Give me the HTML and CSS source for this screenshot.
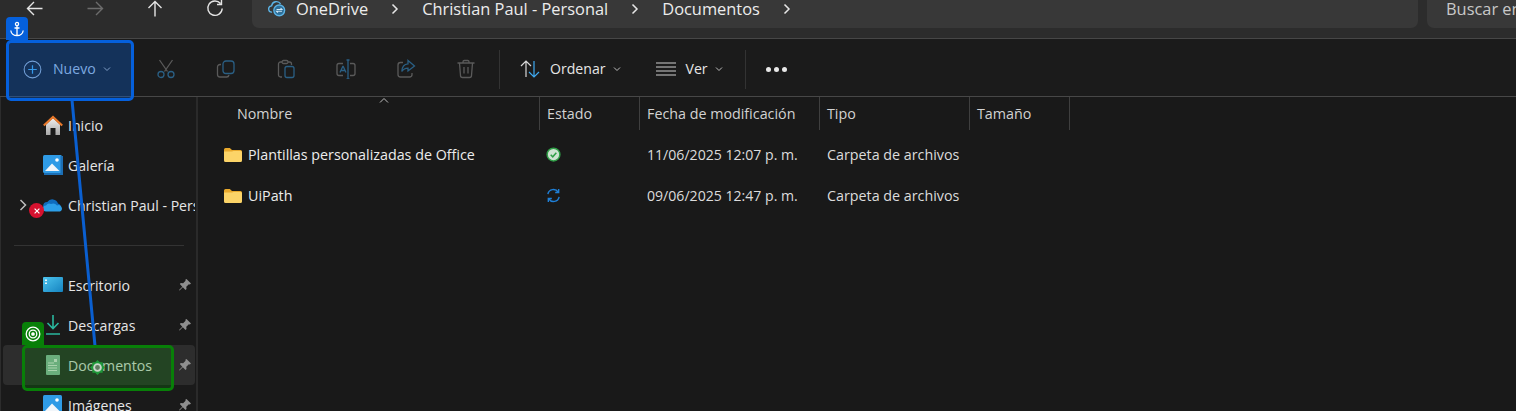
FILE: index.html
```html
<!DOCTYPE html>
<html lang="es">
<head>
<meta charset="utf-8">
<title>Documentos - Explorador de archivos</title>
<link rel="stylesheet" href="styles.css">
</head>
<body>
<div class="app">
  <header class="topbar">
    <div class="navbtns">
      <svg class="nav-ic" viewBox="0 0 20 20"><path d="M17.500 8.500H2.500M9 2 2.500 8.500 9 15"/></svg>
      <svg class="nav-ic dim" viewBox="0 0 20 20"><path d="M2.500 8.500h15M11 2l6.500 6.500L11 15"/></svg>
      <svg class="nav-ic" viewBox="0 0 20 20"><path d="M10 16.500V1.500M3.500 8 10 1.500 16.500 8"/></svg>
      <svg class="nav-ic" viewBox="0 0 20 20"><path d="M15.500 3.500A7.200 7.200 0 1 0 17.200 8.500M16.500 0v4.500H12"/></svg>
    </div>
    <div class="crumbs">
      <svg class="cloud" viewBox="0 0 20 20"><path class="cloud-line" d="M4.500 13.500A3.500 3.500 0 0 1 4 6.500a5.500 5.500 0 0 1 10-2.300"/><circle class="cloud-ring" cx="12.500" cy="11.500" r="6"/><path class="cloud-line white" d="M9.500 10.500h6l-1.500-1.500M15.500 12.500h-6l1.500 1.500"/></svg>
      <span class="crumb first">OneDrive</span>
      <svg class="sep" viewBox="0 0 8 12"><path d="m1.500 1.500 4.500 4.500-4.500 4.500"/></svg>
      <span class="crumb">Christian Paul - Personal</span>
      <svg class="sep" viewBox="0 0 8 12"><path d="m1.500 1.500 4.500 4.500-4.500 4.500"/></svg>
      <span class="crumb">Documentos</span>
      <svg class="sep" viewBox="0 0 8 12"><path d="m1.500 1.500 4.500 4.500-4.500 4.500"/></svg>
    </div>
    <div class="search">Buscar en Documentos</div>
  </header>

  <div class="cmdbar">
    <div class="cmd-new">
      <svg class="plus" viewBox="0 0 20 20"><circle class="plus-ring" cx="10" cy="10" r="8.800"/><path class="plus-mark" d="M10 5.500v9M5.500 10h9"/></svg>
      <span class="cmd-label">Nuevo</span>
      <svg class="chev" viewBox="0 0 8 6"><path d="m1 1.500 3 3 3-3"/></svg>
    </div>
    <div class="cmd-icons">
      <svg class="tool" viewBox="0 0 20 20"><path class="tg" d="M3.500 1 11.500 12.500M16.500 1 8.500 12.500"/><circle class="tb" cx="5" cy="15.500" r="3"/><circle class="tb" cx="15" cy="15.500" r="3"/></svg>
      <svg class="tool" viewBox="0 0 20 20"><path class="tg" d="M5 5.500H4a2.500 2.500 0 0 0-2.500 2.500v7.500A2.500 2.500 0 0 0 4 18h6.500a2.500 2.500 0 0 0 2.500-2"/><rect class="tb" x="7" y="2" width="11" height="12.500" rx="3"/></svg>
      <svg class="tool" viewBox="0 0 20 20"><path class="tg" d="M6 18H4.500A2 2 0 0 1 2.500 16V5a2 2 0 0 1 2-2H6M12 3h1.500a2 2 0 0 1 2 2v1M6 3a1.500 1.500 0 0 1 1.500-1.500h3A1.500 1.500 0 0 1 12 3a1.500 1.500 0 0 1-1.500 1.500h-3A1.500 1.500 0 0 1 6 3Z"/><rect class="tb" x="9" y="7.500" width="9" height="11" rx="2"/></svg>
      <svg class="tool" viewBox="0 0 20 20"><path class="tg" d="M7 4.500H3A2 2 0 0 0 1 6.500v8a2 2 0 0 0 2 2h4M14 4.500h3a2 2 0 0 1 2 2v8a2 2 0 0 1-2 2h-3"/><path class="tb" d="M4 13.500 6.800 7.500h.4l2.800 6M5 11.500h4M10.500 1h3M12 1v19M10.500 20h3"/></svg>
      <svg class="tool" viewBox="0 0 20 20"><path class="tg" d="M7 3.500H4.500a2.500 2.500 0 0 0-2.500 2.500v9.500A2.500 2.500 0 0 0 4.500 18h9a2.500 2.500 0 0 0 2.500-2.500V14"/><path class="tb" d="M12 1.500 18.500 7 12 12V9.200c-3 0-4.800 1-6.200 3.300C6 8.200 8.200 5 12 4.800Z"/></svg>
      <svg class="tool" viewBox="0 0 20 20"><path class="tg" d="M1.500 4h17M7 4V2.800A1.300 1.300 0 0 1 8.300 1.500h3.400A1.300 1.300 0 0 1 13 2.800V4M3.500 4l1 12.500a2 2 0 0 0 2 2h7a2 2 0 0 0 2-2l1-12.500M8 8v6.500M12 8v6.500"/></svg>
    </div>
    <span class="vline"></span>
    <div class="cmd-item sort">
      <svg class="ordenar" viewBox="0 0 20 20"><path class="ord-up" d="M6 18V2M1 7l5-5 5 5"/><path class="ord-down" d="M14 2v16M9 13l5 5 5-5"/></svg>
      <span class="cmd-label">Ordenar</span>
      <svg class="chev" viewBox="0 0 8 6"><path d="m1 1.500 3 3 3-3"/></svg>
    </div>
    <div class="cmd-item view">
      <svg class="ver" viewBox="0 0 20 14"><path d="M0 1h20M0 5h20M0 9h20M0 13h20"/></svg>
      <span class="cmd-label">Ver</span>
      <svg class="chev" viewBox="0 0 8 6"><path d="m1 1.500 3 3 3-3"/></svg>
    </div>
    <span class="vline"></span>
    <div class="dots"><i></i><i></i><i></i></div>
  </div>

  <div class="main">
    <nav class="side">
      <div class="nav-row">
        <svg class="nav-icon" viewBox="0 0 20 20"><defs><linearGradient id="house" x1="0" y1="0" x2="0" y2="1"><stop offset="0" stop-color="#f0f0f0"/><stop offset="1" stop-color="#a8a8a8"/></linearGradient></defs><path fill="url(#house)" d="M3 9.500 10 3l7 6.500V20h-4.500v-7h-5v7H3Z"/><path fill="none" stroke="#e8782a" stroke-width="2.200" d="M0.800 10.500 10 2l9.200 8.500"/></svg>
        <span>Inicio</span>
      </div>
      <div class="nav-row">
        <svg class="nav-icon" viewBox="0 0 20 20"><rect x="0" y="0" width="19" height="18" rx="1.500" fill="#2f9be6"/><rect x="17.500" y="1" width="2.500" height="19" fill="#1c6fb5"/><rect x="1" y="18" width="19" height="2" fill="#1c6fb5"/><path fill="#f2f6fa" d="M2 16 9 8.500 16.500 16Z"/><circle cx="14" cy="5" r="1.800" fill="#fff"/></svg>
        <span>Galería</span>
      </div>
      <div class="nav-row onedrive">
        <svg class="expander" viewBox="0 0 8 12"><path d="m1.500 1 5 5-5 5"/></svg>
        <svg class="nav-icon" viewBox="0 0 20 14"><path fill="#0f6cbd" d="M4 12a4 4 0 0 1 .3-8A6 6 0 0 1 15 5.500 3.500 3.500 0 0 1 16 12Z"/><path fill="#2c9fe8" d="M3 13.500a3 3 0 0 1 0-6 4 4 0 0 1 5-1.500 5 5 0 0 1 6 1.500 3 3 0 0 1 3 6Z"/></svg>
        <span class="clip">Christian Paul - Personal</span>
        <span class="err"><svg viewBox="0 0 10 10"><path d="m2 2 6 6M8 2 2 8"/></svg></span>
      </div>
      <hr class="divider">
      <div class="nav-row">
        <svg class="nav-icon" viewBox="0 0 20 16"><defs><linearGradient id="desk" x1="0" y1="0" x2="1" y2="1"><stop offset="0" stop-color="#4cc4ee"/><stop offset="1" stop-color="#1583c0"/></linearGradient></defs><rect width="20" height="15" rx="1" fill="url(#desk)"/><rect x="2" y="2.500" width="2" height="1.500" fill="#e8f6fc"/><rect x="2" y="5.500" width="2" height="1.500" fill="#e8f6fc"/></svg>
        <span>Escritorio</span>
        <svg class="pin" viewBox="0 0 14 14"><path d="M8.500 1 13 5.500 11.800 6.500 10.800 6.200 8.300 8.700 8.500 11 7.500 12 4.800 9.200 1.500 12.500 1 12l3.300-3.300L1.800 6l1-1 2.300.2 2.500-2.500-.3-1Z"/></svg>
      </div>
      <div class="nav-row">
        <svg class="nav-icon" viewBox="0 0 20 20"><path fill="none" stroke="#2ab79e" stroke-width="1.600" d="M10 0v13M4.500 8 10 13.500 15.500 8M3 19h14"/></svg>
        <span>Descargas</span>
        <svg class="pin" viewBox="0 0 14 14"><path d="M8.500 1 13 5.500 11.800 6.500 10.800 6.200 8.300 8.700 8.500 11 7.500 12 4.800 9.200 1.500 12.500 1 12l3.300-3.300L1.800 6l1-1 2.300.2 2.500-2.500-.3-1Z"/></svg>
      </div>
      <div class="nav-row current">
        <svg class="nav-icon" viewBox="0 0 20 20"><rect x="3" y="0" width="14" height="20" rx="1" fill="#8fc0a8"/><path stroke="#e6f2ec" stroke-width="1" d="M5 8h6M5 10.500h9M5 13h9M5 15.500h9"/><rect x="11" y="4" width="3" height="3" fill="#e6f2ec"/></svg>
        <span>Documentos</span>
        <svg class="pin" viewBox="0 0 14 14"><path d="M8.500 1 13 5.500 11.800 6.500 10.800 6.200 8.300 8.700 8.500 11 7.500 12 4.800 9.200 1.500 12.500 1 12l3.300-3.300L1.800 6l1-1 2.300.2 2.500-2.500-.3-1Z"/></svg>
      </div>
      <div class="nav-row">
        <svg class="nav-icon" viewBox="0 0 20 20"><rect width="19" height="18" rx="1.500" fill="#2f9be6"/><path fill="#f2f6fa" d="M2 16 9 8.500 16.500 16Z"/><circle cx="14" cy="5" r="1.800" fill="#fff"/></svg>
        <span>Imágenes</span>
        <svg class="pin" viewBox="0 0 14 14"><path d="M8.500 1 13 5.500 11.800 6.500 10.800 6.200 8.300 8.700 8.500 11 7.500 12 4.800 9.200 1.500 12.500 1 12l3.300-3.300L1.800 6l1-1 2.300.2 2.500-2.500-.3-1Z"/></svg>
      </div>
    </nav>

    <section class="content">
      <div class="cols head">
        <div class="col name-col">Nombre<svg class="sort-caret" viewBox="0 0 10 5"><path d="m1 4.500 4-4 4 4"/></svg></div>
        <div class="col">Estado</div>
        <div class="col">Fecha de modificación</div>
        <div class="col">Tipo</div>
        <div class="col">Tamaño</div>
      </div>
      <div class="list">
        <div class="cols row">
          <div class="cell name-cell"><svg class="folder" viewBox="0 0 18 14"><path fill="#e9a92c" d="M0 1.500A1.500 1.500 0 0 1 1.500 0h4.300L8 2h8.500A1.500 1.500 0 0 1 18 3.500V6H0Z"/><path fill="#fcd468" d="M0 3.500h8L9.500 3h7A1.500 1.500 0 0 1 18 4.500v8a1.500 1.500 0 0 1-1.500 1.500h-15A1.500 1.500 0 0 1 0 12.500Z"/></svg>Plantillas personalizadas de Office</div>
          <div class="cell status-cell"><svg class="status" viewBox="0 0 16 16"><circle cx="8" cy="8" r="6.800" fill="#cfe3d2" stroke="#2f9e46" stroke-width="1.600"/><path fill="none" stroke="#2f9e46" stroke-width="1.600" d="m5 8.300 2.200 2.200L11 6.200"/></svg></div>
          <div class="cell date">11/06/2025 12:07 p. m.</div>
          <div class="cell">Carpeta de archivos</div>
          <div class="cell"></div>
        </div>
        <div class="cols row">
          <div class="cell name-cell"><svg class="folder" viewBox="0 0 18 14"><path fill="#e9a92c" d="M0 1.500A1.500 1.500 0 0 1 1.500 0h4.300L8 2h8.500A1.500 1.500 0 0 1 18 3.500V6H0Z"/><path fill="#fcd468" d="M0 3.500h8L9.500 3h7A1.500 1.500 0 0 1 18 4.500v8a1.500 1.500 0 0 1-1.500 1.500h-15A1.500 1.500 0 0 1 0 12.500Z"/></svg>UiPath</div>
          <div class="cell status-cell"><svg class="status sync" viewBox="0 0 16 16"><path d="M2 6.500A6 6 0 0 1 13 4.500M13.500 1v3.800H9.800M14 9.500A6 6 0 0 1 3 11.500M2.500 15v-3.800h3.700"/></svg></div>
          <div class="cell date">09/06/2025 12:47 p. m.</div>
          <div class="cell">Carpeta de archivos</div>
          <div class="cell"></div>
        </div>
      </div>
    </section>
  </div>

  <svg class="connector" viewBox="0 0 1516 411"><path d="M72 100 95 346"/></svg>
  <div class="box anchor-box"></div>
  <div class="badge anchor-badge">
    <svg viewBox="0 0 16 16"><circle cx="8" cy="3" r="1.600"/><path d="M8 4.500V14.500M5.500 7h5M1.800 9.500c.3 3 3 5 6.200 5s5.900-2 6.200-5"/></svg>
  </div>
  <div class="box target-box"></div>
  <div class="badge target-badge">
    <svg viewBox="0 0 16 16"><circle cx="8" cy="8" r="6.800"/><circle cx="8" cy="8" r="3.800"/><circle class="solid" cx="8" cy="8" r="1.200"/></svg>
  </div>
  <svg class="marker" viewBox="0 0 16 16"><path class="marker-d" d="M8 0 10.500 2.500 13.500 2.500 13.500 5.500 16 8 13.500 10.500 13.500 13.500 10.500 13.500 8 16 5.500 13.500 2.500 13.500 2.500 10.500 0 8 2.500 5.500 2.500 2.500 5.500 2.500Z"/><circle class="marker-c" cx="8" cy="8" r="3.600"/></svg>
</div>
</body>
</html>
```

FILE: styles.css
```css
* { box-sizing: border-box; }
html, body { margin: 0; height: 100%; background: #191919; overflow: hidden; }
body { font-family: "Open Sans", "Noto Sans", sans-serif; font-size: 14.3px; color: #e6e6e6; }
.app { position: relative; width: 1516px; height: 411px; overflow: hidden; }

.topbar { height: 39px; background: #2c2c2c; border-bottom: 1px solid #474747; display: flex; align-items: flex-start; }
.navbtns { width: 252px; height: 20px; padding-left: 25px; display: flex; gap: 40px; }
.nav-ic { width: 20px; height: 20px; flex: none; fill: none; stroke: #e4e4e4; stroke-width: 1.400; }
.nav-ic.dim { stroke: #6c6c6c; }
.crumbs { width: 1166px; height: 28px; background: #383838; border-radius: 0 0 7px 7px; display: flex; align-items: flex-start; padding: 0 0 0 16px; }
.cloud { width: 18px; height: 18px; flex: none; fill: none; }
.cloud-line { fill: none; stroke: #5cb4e6; stroke-width: 1.500; }
.cloud-line.white { stroke: #cfe8f7; stroke-width: 1.200; }
.cloud-ring { fill: #2e6f99; stroke: #5cb4e6; stroke-width: 1.500; }
.crumb { font-size: 16.4px; line-height: 17px; color: #ececec; white-space: nowrap; }
.crumb.first { margin-left: 10px; }
.sep { width: 8px; height: 12px; margin: 3px 23px 0 23px; flex: none; fill: none; stroke: #e8e8e8; stroke-width: 1.500; }
.search { margin-left: 9px; flex: 1; height: 28px; background: #383838; border-radius: 0 0 0 7px; padding-left: 19px; font-size: 16.4px; line-height: 17px; color: #c8c8c8; white-space: nowrap; overflow: hidden; }

.cmdbar { height: 58px; background: #1b1b1b; border-bottom: 1px solid #474747; display: flex; align-items: center; padding-top: 3px; font-size: 14.1px; }
.cmd-new { width: 134px; padding-left: 23px; display: flex; align-items: center; flex: none; }
.plus { width: 19px; height: 19px; flex: none; fill: none; }
.plus-ring { stroke: #a9bfd6; stroke-width: 1.100; }
.plus-mark { stroke: #4db4f0; stroke-width: 1.300; }
.cmd-label { margin-left: 11px; line-height: 20px; }
.cmd-new .cmd-label { color: #b7cde4; }
.chev { width: 8px; height: 6px; margin-left: 7px; flex: none; fill: none; stroke: #bdbdbd; stroke-width: 1; }
.cmd-icons { width: 365px; padding-left: 22px; display: flex; gap: 40px; flex: none; }
.tool { width: 20px; height: 20px; flex: none; fill: none; stroke-width: 1.300; }
.tg { stroke: #5a5a5a; fill: none; }
.tb { stroke: #2a5f84; fill: none; }
.vline { width: 1px; height: 39px; background: #333; flex: none; }
.cmd-item { display: flex; align-items: center; flex: none; }
.sort { margin-left: 20px; }
.ordenar { width: 20px; height: 20px; flex: none; fill: none; stroke-width: 1.200; }
.ord-up { stroke: #d8d8d8; }
.ord-down { stroke: #3fa9f0; }
.sort .cmd-label { margin-left: 10px; }
.view { margin-left: 35px; margin-right: 22px; }
.ver { width: 20px; height: 14px; flex: none; fill: none; stroke: #cfcfcf; stroke-width: 1.200; }
.view .cmd-label { margin-left: 10px; }
.dots { margin-left: 20px; display: flex; gap: 3px; }
.dots i { width: 5px; height: 5px; border-radius: 50%; background: #e8e8e8; }

.main { display: flex; height: 314px; }
.side { width: 198px; flex: none; padding: 8px 0 0 3px; background: #1a1a1a; border-left: 1px solid #2c2c2c; border-right: 2px solid #2a2a2a; font-size: 14.1px; }
.nav-row { position: relative; height: 40px; width: 192px; margin-left: -1px; display: flex; align-items: center; padding-left: 40px; white-space: nowrap; border-radius: 4px; }
.nav-row span { margin-left: 5px; }
.nav-icon { width: 20px; height: 20px; flex: none; }
.nav-row.current { background: #2d2d2d; }
.clip { overflow: hidden; width: 127px; }
.expander { position: absolute; left: 16px; top: 14px; width: 8px; height: 12px; fill: none; stroke: #bdbdbd; stroke-width: 1.500; }
.err { position: absolute; left: 26px; top: 18px; margin: 0 !important; width: 15px; height: 15px; border-radius: 50%; background: #d6122f; display: flex; align-items: center; justify-content: center; }
.err svg { width: 8px; height: 8px; fill: none; stroke: #fff; stroke-width: 1.500; }
.pin { position: absolute; right: 3px; top: 13px; width: 14px; height: 14px; fill: #8f8f8f; }
.divider { border: 0; height: 1px; background: #333; margin: 20px 12px 19px 10px; }

.content { flex: 1; background: #191919; }
.cols { display: grid; grid-template-columns: 342px 100px 180px 150px 100px; }
.head { height: 33px; }
.col { position: relative; padding-left: 7px; line-height: 33px; border-right: 1px solid #3f3f3f; color: #d2d2d2; }
.name-col { padding-left: 39px; }
.sort-caret { position: absolute; left: 181px; top: 1px; width: 10px; height: 5px; fill: none; stroke: #bdbdbd; stroke-width: 1; }
.list { padding-top: 4px; }
.row { height: 41px; align-items: center; }
.cell { padding-left: 7px; white-space: nowrap; color: #dcdcdc; display: flex; align-items: center; }
.cell.date { font-size: 14.1px; }
.name-cell { padding-left: 26px; color: #ececec; }
.status-cell { padding-left: 6px; }
.folder { width: 18px; height: 14px; margin-right: 6px; flex: none; }
.status { width: 15px; height: 15px; flex: none; }
.sync { fill: none; stroke: #1f7fd6; stroke-width: 1.500; }

.connector { position: absolute; left: 0; top: 0; width: 1516px; height: 411px; fill: none; stroke: #0a5fd0; stroke-width: 3; pointer-events: none; }
.box { position: absolute; border-radius: 5px; }
.anchor-box { left: 6px; top: 40px; width: 128px; height: 61px; border: 3px solid #0560dc; background: rgba(5, 96, 220, .33); }
.target-box { left: 22px; top: 345px; width: 152px; height: 46px; border: 3px solid #087f08; background: rgba(11, 130, 11, .28); }
.badge { position: absolute; width: 22px; height: 23px; border-radius: 4px 4px 0 0; display: flex; align-items: center; justify-content: center; }
.badge svg { width: 16px; height: 16px; fill: none; stroke: #fff; stroke-width: 1.300; }
.anchor-badge { left: 6px; top: 17px; background: #0560dc; }
.target-badge { left: 22px; top: 322px; background: #087f08; }
.badge .solid { fill: #fff; }
.marker { position: absolute; left: 90px; top: 360px; width: 15px; height: 15px; }
.marker-d { fill: #1f9a3a; }
.marker-c { fill: #5f7a5f; stroke: #c9d6c9; stroke-width: 2; }
```
